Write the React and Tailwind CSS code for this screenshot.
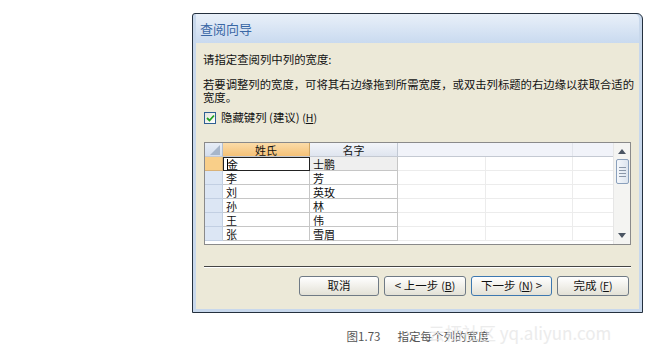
import React from 'react';

const cjk = { fontFamily: '"Noto Sans CJK SC", "Liberation Sans", sans-serif' };

const rows = [
  ['金', '士鹏'],
  ['李', '芳'],
  ['刘', '英玫'],
  ['孙', '林'],
  ['王', '伟'],
  ['张', '雪眉'],
];

const Btn = ({ children, primary, w }) => (
  <button
    className={`h-[20px] ${w} rounded-[3px] border ${primary ? 'border-[#3d78b0]' : 'border-[#6f7a85]'} bg-gradient-to-b from-white to-[#e3e1d6] text-[11.5px] leading-none text-[#111] flex items-center justify-center`}
  >
    {children}
  </button>
);

const Mn = ({ k }) => (
  <span className="ml-[3px] text-[10.5px]">
    (<span className="underline">{k}</span>)
  </span>
);

const App = () => {
  return (
    <div className="relative w-[655px] h-[354px] bg-white overflow-hidden" style={cjk}>
      <div className="pl-[192px] pt-[13px] w-[643px]">
        <div className="w-[451px] h-[300px] border border-[#24303e] rounded-tl-[3px] rounded-tr-[6px] bg-[#c8d8ec] flex flex-col px-[3px] pb-[3px]">
          {/* title bar */}
          <div className="h-[29px] flex items-center px-[4px] bg-gradient-to-b from-[#e9f0f9] to-[#c9daef] rounded-tr-[5px]">
            <span className="text-[13px] text-[#3a67a5]">查阅向导</span>
          </div>

          {/* body */}
          <div className="flex-1 bg-[#ece9d8] flex flex-col px-[7px]">
            <div className="mt-[9px] text-[11.4px] leading-[14px] text-[#111]">请指定查阅列中列的宽度:</div>
            <div className="mt-[12px] text-[11.35px] leading-[13px] text-[#111] whitespace-nowrap">
              若要调整列的宽度，可将其右边缘拖到所需宽度，或双击列标题的右边缘以获取合适的
              <br />
              宽度。
            </div>

            <div className="mt-[5px] flex items-center gap-[5px] pl-[1px]">
              <div className="w-[12px] h-[12px] border border-[#2f5f93] bg-gradient-to-br from-[#e4e4dc] to-white flex items-center justify-center">
                <svg width="9" height="8" viewBox="0 0 9 8">
                  <path d="M1 4 L3.5 6.5 L8 1.5" fill="none" stroke="#21a121" strokeWidth="1.8" />
                </svg>
              </div>
              <span className="text-[11.4px] text-[#111]">
                隐藏键列 (建议) <span className="text-[10.5px]">(<span className="underline">H</span>)</span>
              </span>
            </div>

            {/* grid */}
            <div className="mt-[16px] ml-[1px] mr-[1px] h-[103px] border border-[#8a8a8a] bg-white flex">
              <div className="flex-1 overflow-hidden text-[11px] text-[#111]">
                {/* header */}
                <div className="flex h-[14px] border-b border-[#c4c9d2]">
                  <div className="w-[18px] shrink-0 bg-gradient-to-b from-[#e7edf6] to-[#d3deee] border-r border-[#b5c0d0] relative">
                    <svg className="absolute right-[2px] bottom-[1px]" width="10" height="10" viewBox="0 0 10 10">
                      <path d="M10 0 L10 10 L0 10 Z" fill="#a7b6ca" />
                    </svg>
                  </div>
                  <div className="w-[87px] shrink-0 bg-gradient-to-b from-[#fbdca8] to-[#f5c177] border-r border-[#d0a766] flex items-center justify-center leading-[12px]">
                    姓氏
                  </div>
                  <div className="w-[88px] shrink-0 bg-gradient-to-b from-[#f3f5fa] to-[#dfe5ef] border-r border-[#c2c9d4] flex items-center justify-center leading-[12px]">
                    名字
                  </div>
                  <div className="w-[88px] shrink-0 bg-[#f1f3f9]" />
                  <div className="w-[87px] shrink-0 bg-[#f1f3f9] border-r border-[#e2e5ec]" />
                  <div className="flex-1 bg-[#f1f3f9]" />
                </div>
                {rows.map(([a, b], i) => (
                  <div key={a} className="flex h-[14px]">
                    <div className={`w-[18px] shrink-0 border-r border-b ${i === 0 ? 'bg-[#f9cf89] border-[#d9b278]' : 'bg-[#dce6f4] border-[#c2cfe2]'}`} />
                    <div
                      className={`w-[87px] shrink-0 flex items-center leading-[12px] pl-[3px] ${i === 0 ? 'border border-[#222] bg-white' : 'border-r border-b border-[#c6c6c6]'}`}
                    >
                      {i === 0 && <span className="w-[1px] h-[11px] bg-black mr-[-1px]" />}
                      {a}
                    </div>
                    <div className={`w-[88px] shrink-0 flex items-center leading-[12px] pl-[3px] border-r border-b border-[#c6c6c6] ${i === 0 ? 'bg-[#efefef]' : ''}`}>
                      {b}
                    </div>
                    <div className="w-[88px] shrink-0 border-b border-r border-[#ececec]" />
                    <div className="w-[87px] shrink-0 border-b border-r border-[#ececec]" />
                    <div className="flex-1 border-b border-[#ececec]" />
                  </div>
                ))}
              </div>
              {/* scrollbar */}
              <div className="w-[17px] shrink-0 bg-[#f4f4f2] border-l border-[#e6e6e6] flex flex-col items-center">
                <svg className="mt-[6px]" width="8" height="5" viewBox="0 0 8 5">
                  <path d="M0 5 L4 0 L8 5 Z" fill="#4b5563" />
                </svg>
                <div className="mt-[5px] w-[13px] h-[25px] rounded-[2px] border border-[#8aa0bc] bg-gradient-to-r from-[#f4f7fb] to-[#dde5ef] flex flex-col items-center justify-center gap-[2px]">
                  <div className="w-[7px] h-[1px] bg-[#8a97a8]" />
                  <div className="w-[7px] h-[1px] bg-[#8a97a8]" />
                  <div className="w-[7px] h-[1px] bg-[#8a97a8]" />
                  <div className="w-[7px] h-[1px] bg-[#8a97a8]" />
                </div>
                <div className="flex-1" />
                <svg className="mb-[6px]" width="8" height="5" viewBox="0 0 8 5">
                  <path d="M0 0 L8 0 L4 5 Z" fill="#4b5563" />
                </svg>
              </div>
            </div>

            {/* separator */}
            <div className="mt-[21px] ml-[1px] mr-[1px] h-[2px] border-t border-[#454545] border-b border-b-white" />

            {/* buttons */}
            <div className="mt-[8px] flex justify-end gap-[5px] pr-[3px]">
              <Btn w="w-[80px]">取消</Btn>
              <Btn w="w-[82px]">
                &lt;{'\u00a0'}上一步
                <Mn k="B" />
              </Btn>
              <Btn w="w-[81px]" primary>
                下一步
                <Mn k="N" />
                {'\u00a0'}&gt;
              </Btn>
              <Btn w="w-[72px]">
                完成
                <Mn k="F" />
              </Btn>
            </div>
          </div>
        </div>

        {/* caption */}
        <div className="mt-[15px] flex justify-center text-[11.5px] text-[#555] pl-[1px]">
          <span>图1.73</span>
          <span className="ml-[17px]">指定每个列的宽度</span>
        </div>
      </div>

      {/* watermark */}
      <div className="absolute left-[428px] top-[320px] text-[17px] text-[#e4e4e4] opacity-70 whitespace-nowrap">
        云栖社区 yq.aliyun.com
      </div>
    </div>
  );
};

export default App;
